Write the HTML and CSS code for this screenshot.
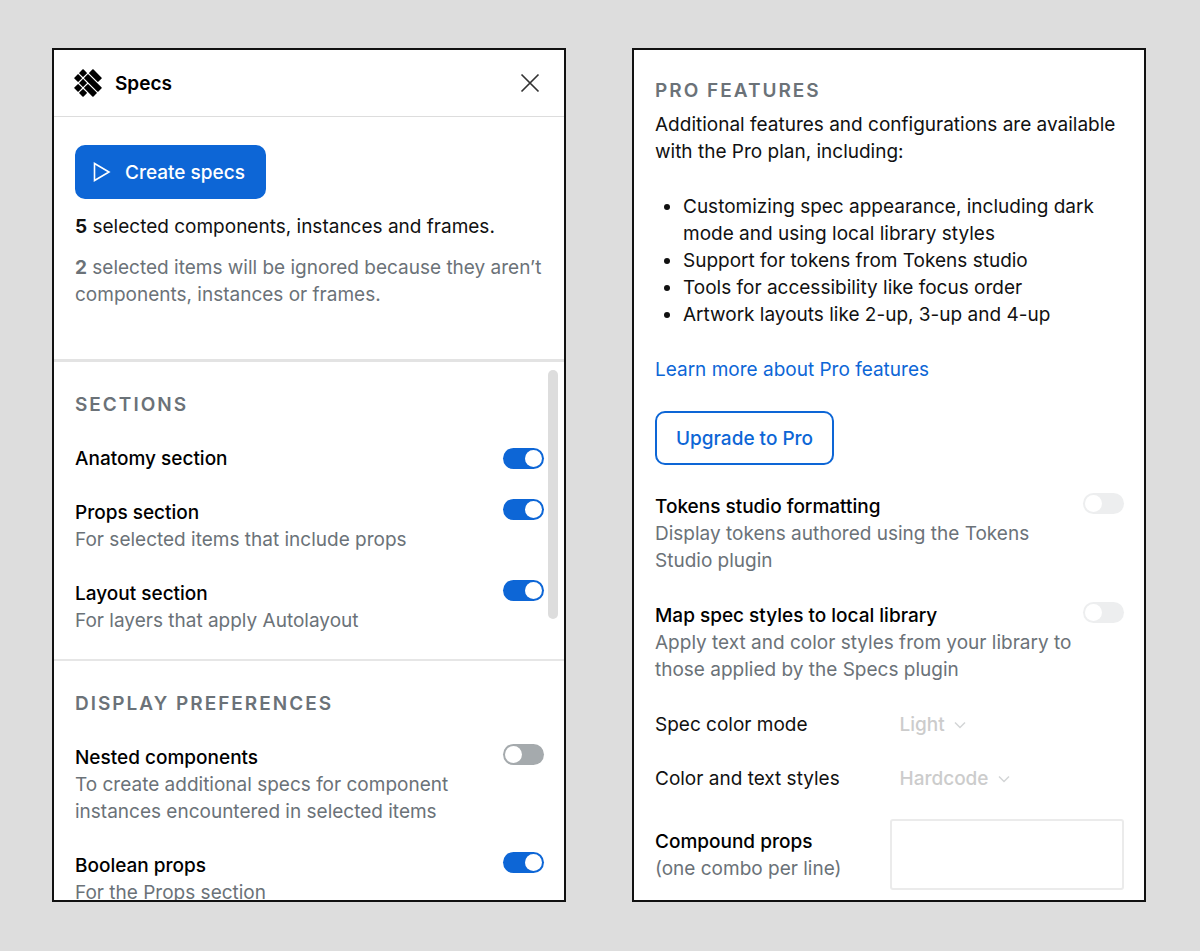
FILE: index.html
```html
<!DOCTYPE html>
<html lang="en">
<head>
    <meta charset="UTF-8">
    <meta name="viewport" content="width=device-width, initial-scale=1.0">
    <title>Specs</title>
    <link rel="stylesheet" href="styles.css">
</head>
<body>
    <main class="page">
        <section class="panel">
            <header class="panel-header">
                <svg class="logo" viewBox="-14 -14 28 28" aria-hidden="true">
                    <g transform="rotate(45)">
                        <rect x="-13.4" y="-6.4" width="5.8" height="5.8" rx="0.5"/>
                        <rect x="-13.4" y="0.6" width="5.8" height="5.8" rx="0.5"/>
                        <rect x="-6.4" y="0.6" width="5.8" height="5.8" rx="0.5"/>
                        <rect x="-6.4" y="7.6" width="5.8" height="5.8" rx="0.5"/>
                        <rect x="0.6" y="7.6" width="5.8" height="5.8" rx="0.5"/>
                        <rect x="-6.4" y="-13.4" width="12.8" height="5.8" rx="0.5"/>
                        <rect x="-6.4" y="-6.4" width="19.8" height="5.8" rx="0.5"/>
                        <rect x="0.6" y="0.6" width="12.8" height="5.8" rx="0.5"/>
                    </g>
                </svg>
                <h1>Specs</h1>
                <button type="button" class="close-btn" aria-label="Close">
                    <svg viewBox="0 0 20 20" width="20" height="20"><path d="M1.5 1.5l17 17M18.5 1.5l-17 17"/></svg>
                </button>
            </header>

            <div class="summary">
                <button type="button" class="btn btn-primary">
                    <svg viewBox="0 0 18 20" width="18" height="20"><path d="M1.5 1.5v17L16 10z"/></svg>
                    Create specs
                </button>
                <p><strong>5</strong> selected components, instances and frames.</p>
                <p class="muted"><strong>2</strong> selected items will be ignored because they aren’t components, instances or frames.</p>
            </div>

            <div class="scroll-area">
                <div class="group">
                    <h2>SECTIONS</h2>
                    <div class="row row-single">
                        <label class="row-text" for="anatomy"><span class="name">Anatomy section</span></label>
                        <input type="checkbox" class="toggle" id="anatomy" checked>
                    </div>
                    <div class="row">
                        <label class="row-text" for="props">
                            <span class="name">Props section</span>
                            <span class="muted">For selected items that include props</span>
                        </label>
                        <input type="checkbox" class="toggle" id="props" checked>
                    </div>
                    <div class="row">
                        <label class="row-text" for="layout">
                            <span class="name">Layout section</span>
                            <span class="muted">For layers that apply Autolayout</span>
                        </label>
                        <input type="checkbox" class="toggle" id="layout" checked>
                    </div>
                </div>
                <div class="group">
                    <h2>DISPLAY PREFERENCES</h2>
                    <div class="row">
                        <label class="row-text" for="nested">
                            <span class="name">Nested components</span>
                            <span class="muted">To create additional specs for component instances encountered in selected items</span>
                        </label>
                        <input type="checkbox" class="toggle" id="nested">
                    </div>
                    <div class="row">
                        <label class="row-text" for="boolean">
                            <span class="name">Boolean props</span>
                            <span class="muted">For the Props section</span>
                        </label>
                        <input type="checkbox" class="toggle" id="boolean" checked>
                    </div>
                </div>
                <div class="scroll-thumb"></div>
            </div>
        </section>

        <section class="panel pro">
            <div class="intro">
                <h2>PRO FEATURES</h2>
                <p>Additional features and configurations are available with the Pro plan, including:</p>
            </div>
            <ul>
                <li>Customizing spec appearance, including dark mode and using local library styles</li>
                <li>Support for tokens from Tokens studio</li>
                <li>Tools for accessibility like focus order</li>
                <li>Artwork layouts like 2-up, 3-up and 4-up</li>
            </ul>
            <a href="#">Learn more about Pro features</a>
            <button type="button" class="btn btn-outline">Upgrade to Pro</button>

            <div class="row">
                <label class="row-text" for="tokens">
                    <span class="name">Tokens studio formatting</span>
                    <span class="muted">Display tokens authored using the Tokens Studio plugin</span>
                </label>
                <input type="checkbox" class="toggle" id="tokens" disabled>
            </div>
            <div class="row">
                <label class="row-text" for="map-styles">
                    <span class="name">Map spec styles to local library</span>
                    <span class="muted">Apply text and color styles from your library to those applied by the Specs plugin</span>
                </label>
                <input type="checkbox" class="toggle" id="map-styles" disabled>
            </div>
            <div class="fields">
                <div class="field">
                    <label for="color-mode">Spec color mode</label>
                    <div class="dropdown">
                        <select id="color-mode" disabled>
                            <option>Light</option>
                        </select>
                        <svg viewBox="0 0 12 8" width="12" height="8"><path d="M1 1.5l5 5 5-5"/></svg>
                    </div>
                </div>
                <div class="field">
                    <label for="text-styles">Color and text styles</label>
                    <div class="dropdown">
                        <select id="text-styles" disabled>
                            <option>Hardcode</option>
                        </select>
                        <svg viewBox="0 0 12 8" width="12" height="8"><path d="M1 1.5l5 5 5-5"/></svg>
                    </div>
                </div>
                <div class="field">
                    <label for="compound">
                        <span class="name">Compound props</span>
                        <span class="muted">(one combo per line)</span>
                    </label>
                    <textarea id="compound" disabled></textarea>
                </div>
            </div>
        </section>
    </main>
</body>
</html>
```
FILE: styles.css
```css
* {
    box-sizing: border-box;
}
body {
    margin: 0;
    background-color: #ddd;
    color: #111;
    font-family: Inter, sans-serif;
    font-size: 19px;
    line-height: 27px;
}
h1, h2, p, ul {
    margin: 0;
}
button, select, textarea {
    font: inherit;
}
.page {
    display: grid;
    grid-template-columns: 1fr 1fr;
    gap: 66px;
    height: 100vh;
    padding: 48px 54px 49px 52px;
}
.panel {
    display: flex;
    flex-direction: column;
    min-height: 0;
    background-color: white;
    border: 2px solid #111;
    overflow: hidden;
}

/* header */
.panel-header {
    display: flex;
    align-items: center;
    flex-shrink: 0;
    height: 67px;
    padding: 0 20px;
    border-bottom: 1px solid #ddd;
}
.logo {
    width: 28px;
    height: 28px;
    margin-right: 13px;
}
h1 {
    font-size: 19px;
    font-weight: 600;
    color: black;
}
.close-btn {
    display: flex;
    margin-left: auto;
    padding: 4px;
    border: none;
    background: none;
    cursor: pointer;
}
.close-btn path {
    fill: none;
    stroke: #333;
    stroke-width: 1.7;
}

/* buttons */
.btn {
    display: flex;
    align-items: center;
    align-self: flex-start;
    height: 54px;
    padding: 0 19px;
    border: 2px solid #0d66d6;
    border-radius: 10px;
    font-weight: 500;
    cursor: pointer;
}
.btn-primary {
    gap: 14px;
    padding: 0 19px 0 16px;
    background-color: #0d66d6;
    color: white;
}
.btn-primary path {
    fill: none;
    stroke: white;
    stroke-width: 1.6;
}
.btn-outline {
    background-color: white;
    color: #0d66d6;
}

/* summary */
.summary {
    display: flex;
    flex-direction: column;
    gap: 14px;
    flex-shrink: 0;
    padding: 28px 20px 51px 21px;
    border-bottom: 3px solid #e3e3e3;
}
.muted {
    color: #6b7278;
}

/* settings */
.scroll-area {
    position: relative;
    min-height: 0;
    overflow: hidden;
}
.group {
    display: flex;
    flex-direction: column;
    gap: 27px;
    padding: 29px 20px 25px 21px;
}
.group + .group {
    border-top: 2px solid #e6e6e6;
}
h2 {
    font-size: 19px;
    font-weight: 600;
    letter-spacing: 2px;
    color: #6b7278;
}
.row {
    display: flex;
    align-items: flex-start;
    gap: 8px;
}
.row-single {
    align-items: center;
}
.row-text {
    flex: 1;
}
.row-text span, .field label span {
    display: block;
}
.name {
    font-weight: 500;
    color: black;
}
.toggle {
    appearance: none;
    flex-shrink: 0;
    display: flex;
    align-items: center;
    width: 41px;
    height: 21px;
    margin: 0;
    padding: 0 2px;
    border-radius: 11px;
    background-color: #a5aaad;
    cursor: pointer;
}
.toggle::before {
    content: "";
    width: 17px;
    height: 17px;
    border-radius: 50%;
    background-color: white;
}
.toggle:checked {
    justify-content: flex-end;
    background-color: #0d66d6;
}
.toggle:disabled {
    background-color: #edeeef;
    cursor: default;
}
.scroll-thumb {
    position: absolute;
    top: 8px;
    right: 6px;
    width: 10px;
    height: 249px;
    border-radius: 5px;
    background-color: #ddd;
}

/* pro panel */
.pro {
    gap: 28px;
    padding: 27px 20px 10px 21px;
}
.intro h2 {
    margin-bottom: 7px;
}
.pro ul {
    padding-left: 28px;
}
.pro a {
    align-self: flex-start;
    color: #0d66d6;
    text-decoration: none;
}
.fields {
    display: flex;
    flex-direction: column;
    gap: 27px;
}
.field {
    display: grid;
    grid-template-columns: 1fr 1fr;
    align-items: center;
}
.dropdown {
    display: flex;
    align-items: center;
    gap: 8px;
    padding-left: 10px;
}
.dropdown select {
    appearance: none;
    padding: 0;
    border: none;
    background: none;
    color: #ccc;
    font-weight: 500;
    opacity: 1;
}
.dropdown path {
    fill: none;
    stroke: #d3d5d6;
    stroke-width: 1.5;
}
.field textarea {
    width: 100%;
    height: 71px;
    padding: 8px;
    border: 2px solid #ebebeb;
    border-radius: 3px;
    background-color: white;
    resize: none;
}
```
